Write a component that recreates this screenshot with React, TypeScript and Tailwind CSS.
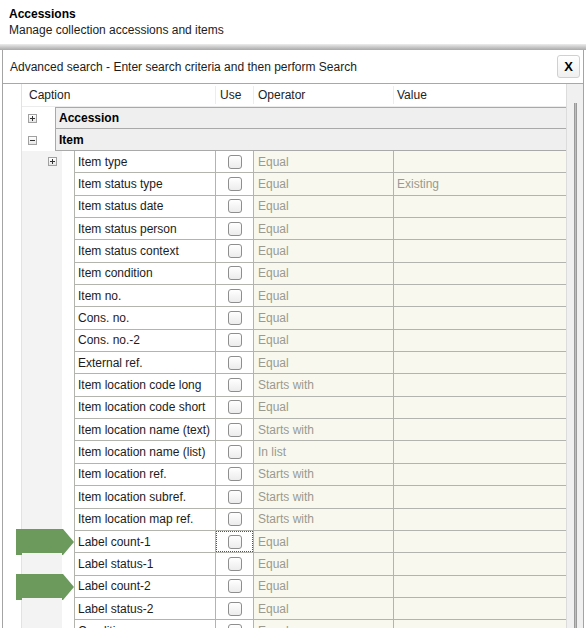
import React from 'react';

type Row = { caption: string; op: string; value?: string; expander?: boolean; arrow?: boolean; focus?: boolean };

const rows: Row[] = [
  { caption: 'Item type', op: 'Equal', expander: true },
  { caption: 'Item status type', op: 'Equal', value: 'Existing' },
  { caption: 'Item status date', op: 'Equal' },
  { caption: 'Item status person', op: 'Equal' },
  { caption: 'Item status context', op: 'Equal' },
  { caption: 'Item condition', op: 'Equal' },
  { caption: 'Item no.', op: 'Equal' },
  { caption: 'Cons. no.', op: 'Equal' },
  { caption: 'Cons. no.-2', op: 'Equal' },
  { caption: 'External ref.', op: 'Equal' },
  { caption: 'Item location code long', op: 'Starts with' },
  { caption: 'Item location code short', op: 'Equal' },
  { caption: 'Item location name (text)', op: 'Starts with' },
  { caption: 'Item location name (list)', op: 'In list' },
  { caption: 'Item location ref.', op: 'Starts with' },
  { caption: 'Item location subref.', op: 'Starts with' },
  { caption: 'Item location map ref.', op: 'Starts with' },
  { caption: 'Label count-1', op: 'Equal', arrow: true, focus: true },
  { caption: 'Label status-1', op: 'Equal' },
  { caption: 'Label count-2', op: 'Equal', arrow: true },
  { caption: 'Label status-2', op: 'Equal' },
  { caption: 'Condition', op: 'Equal' },
];

function Expander({ open }: { open?: boolean }) {
  return (
    <span className="flex h-[9px] w-[9px] items-center justify-center border border-[#a0a0a0] bg-gradient-to-b from-white to-[#e6e6e6]">
      <svg width="7" height="7" viewBox="0 0 7 7">
        <path d="M1 3.5h5" stroke="#333" strokeWidth="1" />
        {!open && <path d="M3.5 1v5" stroke="#333" strokeWidth="1" />}
      </svg>
    </span>
  );
}

function Checkbox() {
  return <span className="block h-[14px] w-[14px] rounded-[3px] border border-[#8e8e8e] bg-gradient-to-b from-white to-[#ececec]" />;
}

function Arrow() {
  return (
    <svg className="absolute left-[-6px] top-[-2px]" width="58" height="26" viewBox="0 0 58 26">
      <path d="M0 0H47L58 13L47 26H0Z" fill="#6b9a5c" />
    </svg>
  );
}

export default function App() {
  return (
    <div className="h-[631px] w-[586px] overflow-hidden bg-white font-['Liberation_Sans',Arial,sans-serif] text-[12px] text-[#1c1c1c]">
      <div className="h-[44px] pl-[9px] pt-[6px]">
        <div className="font-bold leading-[16px] text-black">Accessions</div>
        <div className="leading-[16px]">Manage collection accessions and items</div>
      </div>
      <div className="h-[6px] bg-gradient-to-b from-[#ececec] to-[#a9a9a9]" />
      <div className="mx-[2px] flex h-[578px] flex-col overflow-hidden border-x border-[#a4a4a4]">
        <div className="flex h-[34px] shrink-0 items-center justify-between border-b border-[#a8a8a8] pl-[7px] pr-[3px]">
          <span>Advanced search - Enter search criteria and then perform Search</span>
          <span className="flex h-[23px] w-[23px] items-center justify-center rounded-[3px] border border-[#d0d0d0] bg-gradient-to-b from-white to-[#f0f0f0] text-[13px] font-bold text-black">
            X
          </span>
        </div>
        <div className="flex min-h-0 flex-1">
          <div className="w-[19px] shrink-0 border-r border-[#e2e2e2]" />
          <div className="w-[544px] shrink-0">
            <div className="flex h-[23px] items-center border-b border-[#ececec] text-[#222]">
              <div className="w-[193px] pl-[7px]">Caption</div>
              <div className="w-[38px] border-l border-[#ededed] pl-[4px]">Use</div>
              <div className="w-[140px] border-l border-[#ededed] pl-[4px]">Operator</div>
              <div className="flex-1 border-l border-[#ededed] pl-[3px]">Value</div>
            </div>
            {['Accession', 'Item'].map((g, i) => (
              <div key={g} className="flex h-[22px]">
                <div className="flex w-[33px] items-center pl-[6px]">
                  <Expander open={i === 1} />
                </div>
                <div className={`flex flex-1 items-center border-b border-l border-[#a9a9a9] bg-[#efefef] pl-[3px] font-bold text-black ${i === 0 ? 'border-t' : ''}`}>
                  {g}
                </div>
              </div>
            ))}
            {rows.map((r) => (
              <div key={r.caption} className="flex h-[22.35px]">
                <div className="relative flex w-[52px] items-center">
                  <div className="h-full w-[40px] bg-[#f3f3f3]" />
                  {r.expander && (
                    <div className="absolute left-[26px] top-[6px]">
                      <Expander />
                    </div>
                  )}
                  {r.arrow && <Arrow />}
                </div>
                <div className="flex w-[141px] items-center border-b border-l border-[#b4b4ae] pl-[3px]">{r.caption}</div>
                <div className="flex w-[38px] items-center justify-center border-b border-l border-[#b4b4ae] bg-white">
                  <div className={`flex h-full w-full items-center justify-center ${r.focus ? 'border border-dotted border-[#555]' : ''}`}>
                    <Checkbox />
                  </div>
                </div>
                <div className="flex w-[140px] items-center border-b border-l border-[#b4b4ae] bg-[#f8f8ee] pl-[4px] text-[#9a9a90]">{r.op}</div>
                <div className="flex flex-1 items-center border-b border-l border-[#b4b4ae] bg-[#f8f8ee] pl-[3px] text-[#9a9a90]">{r.value ?? ''}</div>
              </div>
            ))}
          </div>
          <div className="flex w-[18px] shrink-0 justify-center border-l border-[#dcdcdc] bg-[#f0f0f0] pt-[19px]">
            <div className="h-full w-[3px] border-x border-[#9a9a9a] bg-[#bdbdbd]" />
          </div>
        </div>
      </div>
    </div>
  );
}
